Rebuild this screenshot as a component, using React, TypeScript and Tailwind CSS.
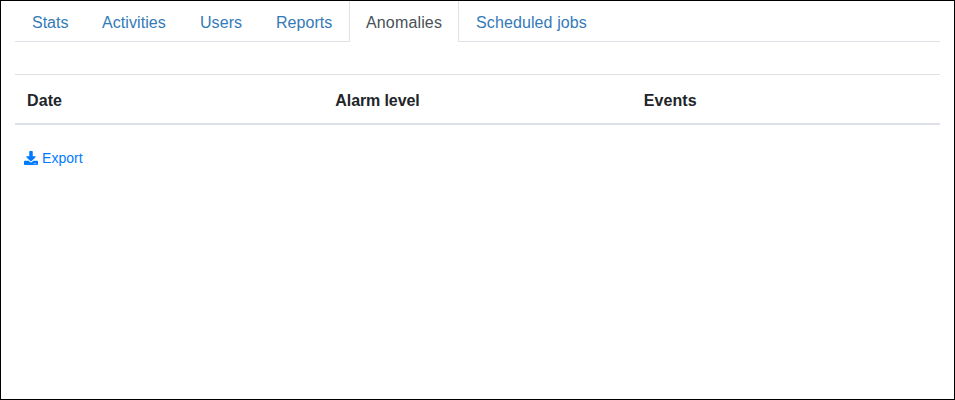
import React from "react";
import { FaDownload } from "react-icons/fa";

const tabs = [
  { label: "Stats", size: "w-[70px]" },
  { label: "Activities", size: "w-[98px] tracking-[0.08px]" },
  { label: "Users", size: "w-[76px] tracking-[0.06px]" },
  { label: "Reports", size: "w-[90px] tracking-[0.04px]" },
  { label: "Anomalies", size: "w-[110px] tracking-[0.15px]" },
  { label: "Scheduled jobs", size: "w-[145px] tracking-[0.11px]" },
];

const columns = [
  { label: "Date", size: "tracking-[0.1px]" },
  { label: "Alarm level", size: "tracking-[-0.1px]" },
  { label: "Events", size: "tracking-[0.1px]" },
];

export default function App() {
  return (
    <div className="h-[400px] w-[955px] overflow-hidden border border-black bg-white px-[14px] font-['Liberation_Sans',Arial,sans-serif] text-base text-[#212529]">
      <nav className="flex h-[41px] border-b border-[#dee2e6]">
        {tabs.map(({ label, size }) => (
          <a
            key={label}
            className={`${size} whitespace-nowrap border-x pt-[10px] pl-4 leading-6 ${
              label === "Anomalies"
                ? "-mb-px h-[41px] border-[#dee2e6] bg-white text-[#495057]"
                : "h-[40px] border-transparent text-[#337ab7]"
            }`}
          >
            {label}
          </a>
        ))}
      </nav>
      <table className="mt-8 w-full table-fixed border-collapse">
        <thead>
          <tr>
            {columns.map(({ label, size }) => (
              <th
                key={label}
                className={`${size} border-t border-b-2 border-[#dee2e6] px-3 pt-[14px] pb-[10px] text-left font-bold leading-6`}
              >
                {label}
              </th>
            ))}
          </tr>
        </thead>
      </table>
      <a className="mt-[22px] ml-[9px] flex gap-1 text-sm leading-[21px] text-[#007bff]">
        <FaDownload className="mt-[4px] h-[14px] w-[14px]" />
        <span className="pt-px tracking-[0.05px]">Export</span>
      </a>
    </div>
  );
}
